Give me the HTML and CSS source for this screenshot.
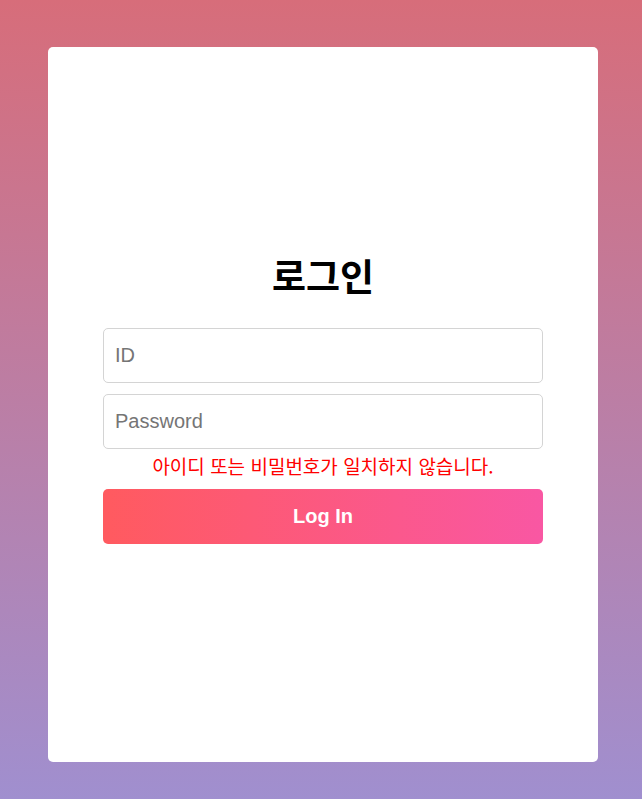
FILE: index.html
```html
<!DOCTYPE html>
<html lang="ko">
<head>
<meta charset="utf-8">
<title>로그인</title>
<link rel="stylesheet" href="styles.css">
</head>
<body>
<main class="card">
  <form class="login">
    <h1 class="title">로그인</h1>
    <input class="field" type="text" placeholder="ID">
    <input class="field field-last" type="password" placeholder="Password">
    <p class="error">아이디 또는 비밀번호가 일치하지 않습니다.</p>
    <button class="btn" type="button">Log In</button>
  </form>
</main>
</body>
</html>
```
FILE: styles.css
```css
* { box-sizing: border-box; }
html, body { margin: 0; height: 100%; }
body {
  min-height: 799px;
  background: linear-gradient(180deg, #d76d7a 0%, #a08fcf 100%);
  padding: 47px 44px 37px 48px;
  font-family: "Liberation Sans", Arial, "Noto Sans CJK KR", sans-serif;
}
.card {
  width: 550px;
  height: 715px;
  background: #fff;
  border-radius: 5px;
  display: flex;
  align-items: center;
  justify-content: center;
}
.login {
  width: 440px;
  display: flex;
  flex-direction: column;
  margin-top: -12px;
}
.title {
  margin: 0 0 31px;
  text-align: center;
  font-family: "Noto Sans CJK KR", sans-serif;
  font-size: 37px;
  font-weight: 700;
  line-height: 44px;
  color: #000;
}
.field {
  height: 55px;
  border: 1px solid #d4d4d4;
  border-radius: 5px;
  padding: 0 11px;
  font-family: "Liberation Sans", Arial, sans-serif;
  font-size: 20px;
  color: #333;
  margin-bottom: 11px;
  outline: none;
}
.field::placeholder { color: #757575; }
.field-last { margin-bottom: 0; }
.error {
  margin: 0 0 6px;
  text-align: center;
  color: #ff0000;
  font-family: "Noto Sans CJK KR", sans-serif;
  font-size: 19px;
  line-height: 34px;
}
.btn {
  height: 55px;
  border: 0;
  border-radius: 5px;
  background: linear-gradient(90deg, #ff5a5f 0%, #f957a3 100%);
  color: #fff;
  font-family: "Liberation Sans", Arial, sans-serif;
  font-weight: 700;
  font-size: 20px;
}
```
